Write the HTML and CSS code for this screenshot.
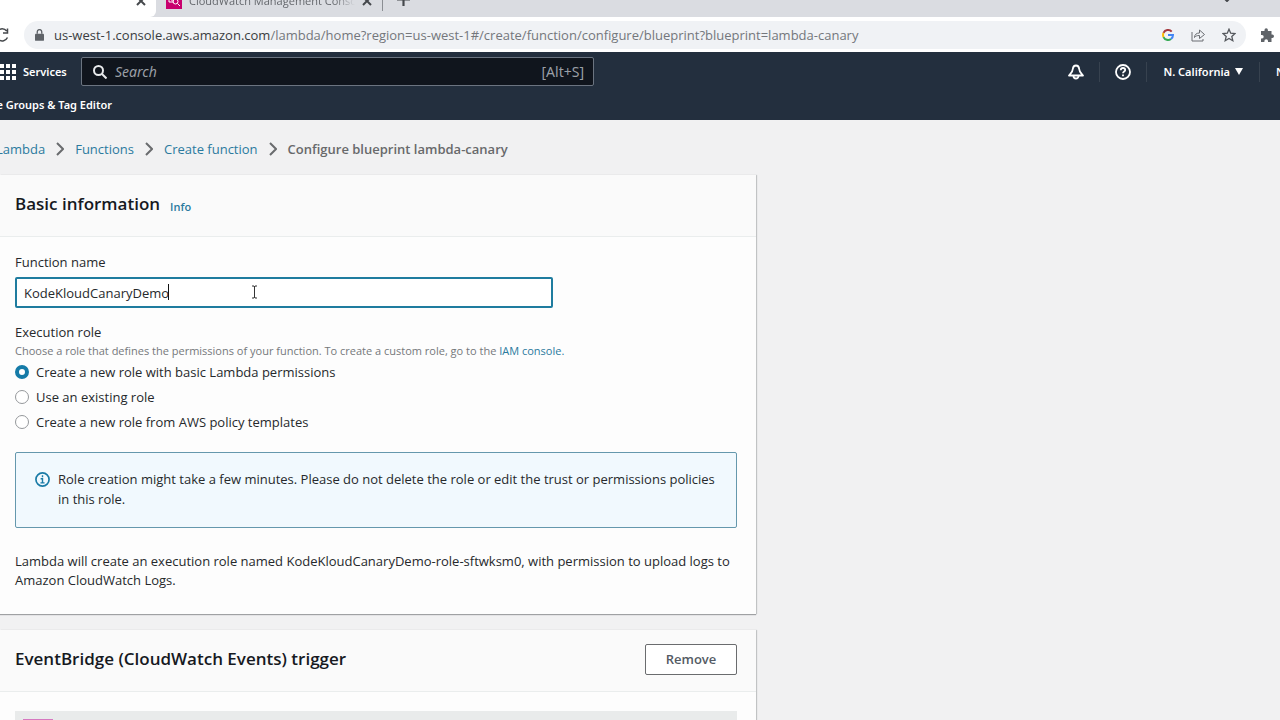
FILE: index.html
```html
<!DOCTYPE html>
<html lang="en">
<head>
  <meta charset="UTF-8">
  <title>Configure blueprint lambda-canary</title>
  <link rel="stylesheet" href="styles.css">
</head>
<body>

<div class="browser">
  <div class="tabs">
    <div class="tab active">
      <svg class="close" viewBox="0 0 10 10"><path d="M1 1l8 8M9 1l-8 8"/></svg>
    </div>
    <div class="tab">
      <svg class="favicon" viewBox="0 0 16 16">
        <rect width="16" height="16" fill="#c8006e"/>
        <g fill="none" stroke="#fff">
          <path d="M3 2v7h5M5 3v4h3"/>
          <circle cx="9.500" cy="8.500" r="2.500"/>
          <path d="M11.500 10.500l2.500 2.500"/>
        </g>
      </svg>
      <span class="tab-title">CloudWatch Management Console</span>
      <svg class="close" viewBox="0 0 10 10"><path d="M1 1l8 8M9 1l-8 8"/></svg>
    </div>
    <button class="new-tab" aria-label="New tab">
      <svg viewBox="0 0 12 12"><path d="M6 0v12M0 6h12"/></svg>
    </button>
    <svg class="tab-search" viewBox="0 0 10 6"><path d="M1 1l4 4 4-4"/></svg>
  </div>
  <div class="toolbar">
    <button class="reload" aria-label="Reload">
      <svg viewBox="0 0 16 16"><path d="M13.500 10.500a6 6 0 1 1-.8-6.500M13.500 1.500v4.500h-4.500"/></svg>
    </button>
    <div class="omnibox">
      <svg class="lock" viewBox="0 0 10 13">
        <rect x="0" y="5" width="10" height="8" rx="1" fill="#5f6368"/>
        <path d="M2.500 5v-2a2.500 2.500 0 0 1 5 0v2" fill="none" stroke="#5f6368" stroke-width="1.500"/>
      </svg>
      <div class="url"><b>us-west-1.console.aws.amazon.com</b>/lambda/home?region=us-west-1#/create/function/configure/blueprint?blueprint=lambda-canary</div>
      <svg class="google" viewBox="0 0 12 12" fill="none" stroke-width="2">
        <path d="M9.700 2.600a5 5 0 0 0-8.200 1.300" stroke="#a53a3f"/>
        <path d="M1.500 3.900a5 5 0 0 0 0 4.200" stroke="#fbbc05"/>
        <path d="M1.500 8.100a5 5 0 0 0 7.500 1.900" stroke="#34a853"/>
        <path d="M9 10a5 5 0 0 0 2-4h-5" stroke="#4285f4"/>
      </svg>
      <svg class="share" viewBox="0 0 14 14" fill="none" stroke="#6a6d72">
        <path d="M1 4v9h11v-2"/>
        <path d="M3.500 9.500c0-3 2-4.500 5-4.500v-3l5 4.500-5 4v-3c-2.500 0-4 .5-5 2z"/>
      </svg>
      <svg class="star" viewBox="0 0 14 14" fill="none" stroke="#55585d" stroke-width="1.300">
        <path d="M7 1.200l1.700 4 4.300.4-3.200 2.900 1 4.200-3.800-2.200-3.800 2.200 1-4.200-3.200-2.900 4.300-.4z"/>
      </svg>
    </div>
    <svg class="puzzle" viewBox="0 0 14 14">
      <path d="M1 3h3.500v-1a1.700 1.700 0 0 1 3.400 0v1h3.600v3.500h.8a1.700 1.700 0 0 1 0 3.400h-.8v4.100h-3.500v-1a1.800 1.800 0 0 0-3.600 0v1h-3.400v-3.600h1a1.700 1.700 0 0 0 0-3.400h-1z" fill="#5f6368"/>
    </svg>
  </div>
</div>

<header class="aws">
  <nav class="aws-nav">
    <button class="services">
      <svg viewBox="0 0 16 16">
        <path d="M0 0h4v4h-4zM6 0h4v4h-4zM12 0h4v4h-4zM0 6h4v4h-4zM6 6h4v4h-4zM12 6h4v4h-4zM0 12h4v4h-4zM6 12h4v4h-4zM12 12h4v4h-4z" fill="#fff"/>
      </svg>
      Services
    </button>
    <label class="search">
      <svg viewBox="0 0 14 14" fill="none" stroke="#e8eaec" stroke-width="2">
        <circle cx="5.500" cy="5.500" r="4.500"/>
        <path d="M9 9l4.500 4.500"/>
      </svg>
      <input type="search" placeholder="Search" aria-label="Search">
      <span>[Alt+S]</span>
    </label>
    <div class="account">
      <button class="account-item" aria-label="Notifications">
        <svg viewBox="0 0 16 16" fill="none" stroke="#fff" stroke-width="1.800" stroke-linejoin="round">
          <path d="M8 1.500c-2 0-3 1.500-3.200 3.500-.2 3-1.300 3.500-3.800 6.500h14c-2.500-3-3.600-3.500-3.800-6.500-.2-2-1.200-3.500-3.200-3.500z"/>
          <path d="M5.500 12a2.500 2.500 0 0 0 5 0"/>
        </svg>
      </button>
      <button class="account-item" aria-label="Help">
        <svg viewBox="0 0 16 16" fill="none" stroke="#fff" stroke-width="1.800">
          <circle cx="8" cy="8" r="7"/>
          <path d="M5.800 6.200c0-3 4.400-2.800 4.400-.2 0 1.500-2.200 1.500-2.200 3.300M8 10.500v1.700"/>
        </svg>
      </button>
      <button class="account-item region">N. California
        <svg viewBox="0 0 8 7"><path d="M0 0h8l-4 7z" fill="#fff"/></svg>
      </button>
      <button class="account-item user">N</button>
    </div>
  </nav>
  <div class="favorites"><a href="#">Resource Groups &amp; Tag Editor</a></div>
</header>

<main class="content">
  <nav class="breadcrumbs">
    <a href="#">Lambda</a>
    <svg viewBox="0 0 8 14"><path d="M1 1l6 6-6 6"/></svg>
    <a href="#">Functions</a>
    <svg viewBox="0 0 8 14"><path d="M1 1l6 6-6 6"/></svg>
    <a href="#">Create function</a>
    <svg viewBox="0 0 8 14"><path d="M1 1l6 6-6 6"/></svg>
    <span>Configure blueprint lambda-canary</span>
  </nav>

  <section class="card">
    <div class="card-header">
      <h2>Basic information</h2>
      <a class="info" href="#">Info</a>
    </div>
    <div class="card-body">
      <label class="label" for="name">Function name</label>
      <div class="field">
        <input id="name" type="text" value="KodeKloudCanaryDemo">
        <i class="caret"></i>
        <svg class="pointer" viewBox="0 0 7 14"><path d="M1 1h2l.5 1 .5-1h2M3.500 1.500v11M1 13h2l.5-1 .5 1h2"/></svg>
      </div>

      <div class="label" id="role">Execution role</div>
      <p class="hint">Choose a role that defines the permissions of your function. To create a custom role, go to the <a href="#">IAM console.</a></p>
      <div class="radios" role="radiogroup" aria-labelledby="role">
        <label><input type="radio" name="role" checked> Create a new role with basic Lambda permissions</label>
        <label><input type="radio" name="role"> Use an existing role</label>
        <label><input type="radio" name="role"> Create a new role from AWS policy templates</label>
      </div>

      <div class="alert">
        <svg viewBox="0 0 16 16" fill="none" stroke="#1a7ba6" stroke-width="1.800">
          <circle cx="8" cy="8" r="7"/>
          <path d="M8 3.500v2M6 7.200h2v4M5.800 11.600h4.400" stroke-width="1.500"/>
        </svg>
        <p>Role creation might take a few minutes. Please do not delete the role or edit the trust or permissions policies in this role.</p>
      </div>

      <p class="note">Lambda will create an execution role named KodeKloudCanaryDemo-role-sftwksm0, with permission to upload logs to Amazon CloudWatch Logs.</p>
    </div>
  </section>

  <section class="card">
    <div class="card-header">
      <h2>EventBridge (CloudWatch Events) trigger</h2>
      <button class="remove">Remove</button>
    </div>
    <div class="card-body">
      <div class="source"><div class="source-icon"></div></div>
    </div>
  </section>
</main>

</body>
</html>
```

FILE: styles.css
```css
* {
  box-sizing: border-box;
}

body {
  margin: 0;
  height: 100vh;
  overflow: hidden;
  background: #f1f1f2;
  color: #26292c;
  font-family: 'Open Sans', 'Noto Sans', sans-serif;
  font-size: 13px;
  line-height: 20px;
}

a {
  color: #2b7a9e;
  text-decoration: none;
}

h2,
p {
  margin: 0;
}

svg {
  display: block;
  flex: none;
}

button {
  padding: 0;
  border: 0;
  background: none;
  color: inherit;
  font: inherit;
}

/* browser */
.browser {
  background: #fff;
}

.tabs {
  display: flex;
  align-items: flex-end;
  height: 17px;
  overflow: hidden;
  background: #dadce1;
}

.tab {
  display: flex;
  align-items: center;
  flex: none;
  gap: 7px;
  width: 226px;
  height: 32px;
  padding: 0 10px;
  color: #64676c;
}

.tab.active {
  justify-content: flex-end;
  width: 156px;
  background: #fff;
  border-bottom-right-radius: 6px;
}

.tab-title {
  flex: 1;
  overflow: hidden;
  font-size: 11px;
  white-space: nowrap;
  -webkit-mask-image: linear-gradient(90deg, #000 88%, transparent);
  mask-image: linear-gradient(90deg, #000 88%, transparent);
}

.favicon {
  width: 16px;
  height: 16px;
}

.close {
  width: 10px;
  height: 10px;
}

.close path,
.new-tab path,
.tab-search path,
.reload path {
  fill: none;
  stroke: #45484c;
  stroke-width: 2;
}

.new-tab {
  display: flex;
  align-items: center;
  height: 22px;
  margin-bottom: 6px;
  padding: 0 0 2px 14px;
  border-left: 1px solid #8b8e93;
}

.new-tab svg {
  width: 13px;
  height: 13px;
}

.tab-search {
  width: 10px;
  height: 6px;
  margin: 0 48px 15px auto;
}

.toolbar {
  display: flex;
  align-items: center;
  gap: 14px;
  height: 35px;
  padding-right: 6px;
}

.reload {
  margin-left: -6px;
}

.reload svg {
  width: 16px;
  height: 16px;
}

.reload path {
  stroke-width: 1.5;
}

.omnibox {
  display: flex;
  align-items: center;
  flex: 1;
  height: 28px;
  padding: 0 10px 0 11px;
  border-radius: 14px;
  background: #f0f2f5;
}

.lock {
  width: 9px;
  height: 12px;
  margin-right: 10px;
}

.url {
  flex: 1;
  color: #74777c;
  white-space: nowrap;
}

.url b {
  color: #3a3d41;
  font-weight: 400;
}

.google {
  width: 12px;
  height: 12px;
}

.share,
.star {
  width: 14px;
  height: 14px;
  margin-left: 17px;
}

.puzzle {
  width: 14px;
  height: 14px;
}

/* console header */
.aws {
  height: 68px;
  background: #232f3e;
  color: #fff;
  font-family: 'Noto Sans', 'Open Sans', sans-serif;
  font-size: 11px;
  font-weight: 600;
}

.aws-nav {
  display: flex;
  align-items: center;
  height: 39px;
}

.services {
  display: flex;
  align-items: center;
  gap: 7px;
  width: 81px;
}

.services svg {
  width: 16px;
  height: 16px;
}

.search {
  display: flex;
  align-items: center;
  gap: 8px;
  flex: 0 1 513px;
  height: 29px;
  padding: 0 9px 0 11px;
  border: 1px solid #6b7480;
  border-radius: 2px;
  background: #10151d;
}

.search svg {
  width: 14px;
  height: 14px;
}

.search input {
  flex: 1;
  min-width: 0;
  padding: 0;
  border: 0;
  outline: 0;
  background: none;
  color: #fff;
  font: inherit;
  font-size: 14px;
  font-weight: 400;
}

.search input::placeholder {
  color: #9a9fa6;
  font-style: italic;
}

.search span {
  color: #9a9fa6;
  font-size: 14px;
  font-weight: 400;
}

.account {
  display: flex;
  margin-left: auto;
}

.account-item {
  display: flex;
  align-items: center;
  height: 20px;
  padding: 0 15px;
  border-right: 1px solid #37424f;
}

.account-item svg {
  width: 16px;
  height: 16px;
}

.account-item.region svg {
  width: 8px;
  height: 7px;
}

.region {
  gap: 5px;
  padding: 0 16px;
}

.user {
  width: 20px;
  padding: 0 0 0 16px;
  border: 0;
  overflow: hidden;
}

.favorites {
  display: flex;
  justify-content: flex-end;
  width: 112px;
  padding-top: 4px;
  white-space: nowrap;
}

.favorites a {
  color: #fff;
}

/* page */
.content {
  display: flex;
  flex-direction: column;
  gap: 16px;
  max-width: 756px;
}

.breadcrumbs {
  display: flex;
  align-items: center;
  gap: 11px;
  height: 39px;
  margin-left: -4px;
  padding-top: 18px;
}

.breadcrumbs svg {
  width: 8px;
  height: 14px;
}

.breadcrumbs path {
  fill: none;
  stroke: #6a6c6e;
  stroke-width: 2;
}

.breadcrumbs span {
  color: #68696b;
  font-weight: 600;
}

.card {
  background: #fdfdfd;
  box-shadow: 0 1px 1px #9fa1a3, 1px 0 1px #c8cacb;
}

.card-header {
  display: flex;
  align-items: center;
  gap: 10px;
  height: 62px;
  padding: 0 19px 3px 15px;
  border-bottom: 1px solid #eaeded;
  background: #fafafa;
}

.card-header h2 {
  color: #16191f;
  font-size: 17px;
  font-weight: 600;
  line-height: 24px;
}

.info {
  padding-top: 5px;
  font-size: 11px;
  font-weight: 600;
}

.card-body {
  padding: 15px 19px 24px 15px;
}

.label {
  display: block;
}

.field {
  position: relative;
  max-width: 538px;
  margin: 5px 0 14px;
}

.field input {
  display: block;
  width: 100%;
  height: 31px;
  padding: 0 7px;
  border: 2px solid #1f7c9f;
  border-radius: 2px;
  outline: 0;
  background: #fff;
  color: inherit;
  font: inherit;
}

.caret {
  position: absolute;
  top: 7px;
  left: 153px;
  width: 1px;
  height: 16px;
  background: #111;
}

.pointer {
  position: absolute;
  top: 8px;
  left: 236px;
  width: 7px;
  height: 14px;
  fill: none;
  stroke: #333;
}

.hint {
  color: #75787b;
  font-size: 11px;
  line-height: 18px;
}

.radios {
  display: flex;
  flex-direction: column;
  gap: 5px;
  padding: 2px 0 20px;
}

.radios label {
  display: flex;
  align-items: center;
  gap: 7px;
}

.radios input {
  appearance: none;
  width: 14px;
  height: 14px;
  margin: 0;
  border: 1px solid #95989b;
  border-radius: 50%;
  background: #fff;
}

.radios input:checked {
  border: 4px solid #157ba8;
}

.alert {
  display: flex;
  gap: 8px;
  padding: 16px 19px 18px;
  border: 1px solid #6598ad;
  border-radius: 2px;
  background: #f1f9fe;
}

.alert svg {
  width: 15px;
  height: 15px;
  margin-top: 3px;
}

.note {
  padding-top: 24px;
  line-height: 19px;
}

.remove {
  width: 92px;
  height: 31px;
  margin-left: auto;
  border: 1px solid #6a6c6e;
  border-radius: 2px;
  background: #fff;
  color: #545b64;
  font-weight: 600;
}

.source {
  height: 60px;
  margin-top: 4px;
  padding: 8px;
  background: #e9ebeb;
}

.source-icon {
  width: 30px;
  height: 30px;
  background: #d678c0;
}
```
